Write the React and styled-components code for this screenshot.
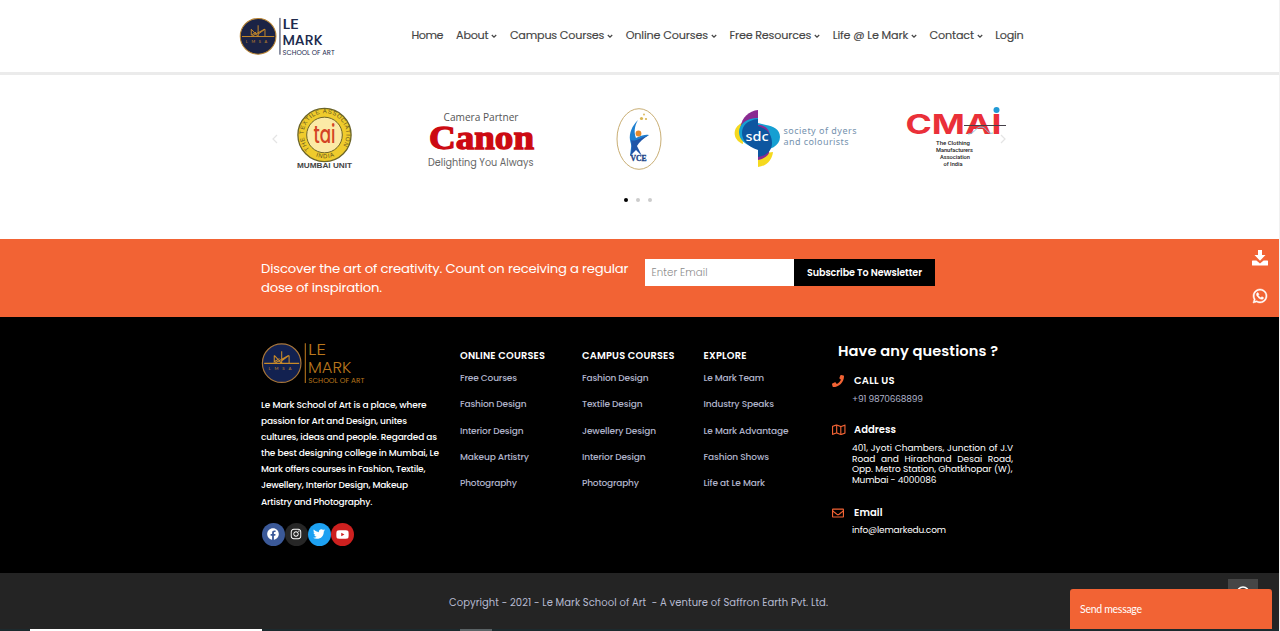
import React, { useLayoutEffect, useRef, useState } from 'react';
import styled, { createGlobalStyle } from 'styled-components';
import { FaWhatsapp, FaFacebook, FaInstagram, FaTwitter, FaYoutube, FaPhone, FaRegMap, FaRegEnvelope } from 'react-icons/fa';

const ORANGE = '#f26334';

const GlobalStyle = createGlobalStyle`
  * { box-sizing: border-box; }
  body {
    margin: 0;
    overflow: hidden;
    background: #fff;
    font-family: Poppins, Inter, "Open Sans", sans-serif;
    font-feature-settings: "cv11";
  }
  p, h3, h4, ul { margin: 0; padding: 0; font-weight: inherit; }
  ul { list-style: none; }
  svg { display: block; flex: none; overflow: visible; }
`;

/* Tracks a line of text so that it fills the given width. */
const Line = styled.span`
  display: inline-block;
  white-space: nowrap;
`;

function Fit({ w, children }) {
  const ref = useRef(null);
  const [tracking, setTracking] = useState(0);
  useLayoutEffect(() => {
    const range = document.createRange();
    range.selectNodeContents(ref.current);
    const natural = range.getBoundingClientRect().width;
    setTracking((w - natural) / (children.length - 1));
  }, [w, children]);
  return <Line ref={ref} style={{ width: `${w}px`, letterSpacing: `${tracking}px` }}>{children}</Line>;
}

const Page = styled.div`
  position: relative;
  width: 1280px;
  height: 631px;
  overflow: hidden;
  border-right: 1px solid #f1f1f1;
  background: #fff;
`;

const Header = styled.header`
  display: flex;
  align-items: center;
  height: 75px;
  padding: 0 0 0 239px;
  border-bottom: 3px solid #ebebeb;
`;

const Nav = styled.nav`
  display: flex;
  gap: 12.6px;
  margin-left: 74.5px;
  padding-bottom: 1px;
`;

const NavItem = styled.a`
  display: flex;
  align-items: center;
  gap: 2.7px;
  height: 20px;
  color: #444;
  font-size: 11.2px;
  font-weight: 400;
  -webkit-text-stroke: 0.15px #444;
`;

const Partners = styled.section`
  display: flex;
  flex-direction: column;
  height: 163.5px;
  padding: 28px 0 0 271.5px;
`;

const Slides = styled.div`
  display: flex;
  align-items: center;
  height: 72px;
`;

const Slide = styled.div`
  margin-left: ${(p) => p.$gap}px;
`;

const Dots = styled.div`
  display: flex;
  gap: 8px;
  margin: 22.5px 0 0 352.7px;
`;

const Dot = styled.i`
  width: 4px;
  height: 4px;
  border-radius: 50%;
  background: ${(p) => (p.$active ? '#000' : '#ccc')};
`;

const Newsletter = styled.section`
  display: flex;
  height: 78.5px;
  padding: 20px 0 0 261px;
  background: ${ORANGE};
  color: #fff;
`;

const Pitch = styled.p`
  display: flex;
  flex-direction: column;
  width: 384px;
  font-size: 13.2px;
  line-height: 19px;
`;

const Form = styled.div`
  display: flex;
  height: 27px;
  margin-top: 0.5px;
`;

const Field = styled.div`
  width: 149px;
  padding-left: 6.5px;
  background: #fff;
  color: #8c8c8c;
  font-size: 10.2px;
  font-weight: 300;
  line-height: 27px;
`;

const Subscribe = styled.button`
  width: 141px;
  padding: 0;
  border: 0;
  background: #000;
  color: #fff;
  font: inherit;
  font-feature-settings: inherit;
  font-size: 9.6px;
  font-weight: 600;
`;

const SideActions = styled.div`
  position: absolute;
  top: 250px;
  right: 11px;
  display: flex;
  flex-direction: column;
  align-items: center;
  gap: 22px;
  color: #fff;
`;

const Footer = styled.footer`
  display: grid;
  grid-template-columns: 199px 122px 121.5px 128.5px 190px;
  height: 256px;
  padding: 22px 0 0 261px;
  background: #000;
  color: #fff;
`;

const About = styled.div`
  display: flex;
  flex-direction: column;
`;

const Blurb = styled.p`
  display: flex;
  flex-direction: column;
  margin-top: 10.3px;
  font-size: 9px;
  font-weight: 500;
  line-height: 16.1px;
`;

const Socials = styled.div`
  display: flex;
  margin: 13.2px 0 0 0.5px;
`;

const Social = styled.a`
  display: grid;
  place-items: center;
  width: 23px;
  height: 23px;
  border-radius: 50%;
  background: ${(p) => p.$color};
`;

const LinkColumn = styled.div`
  padding-top: 9px;
`;

const ColumnTitle = styled.h4`
  height: 16px;
  margin-bottom: 1.3px;
  font-size: 9.8px;
  font-weight: 600;
  line-height: 16px;
`;

const FooterLink = styled.li`
  height: 26.2px;
  color: #b0b4cb;
  font-size: 9px;
  font-weight: 500;
  line-height: 26px;
`;

const Contact = styled.div`
  padding-top: 3px;
`;

const ContactTitle = styled.h3`
  padding-left: 6px;
  font-size: 14.6px;
  font-weight: 600;
  line-height: 18px;
`;

const ContactHead = styled.div`
  display: grid;
  grid-template-columns: 22px 1fr;
  align-items: center;
  height: 16px;
  margin-top: ${(p) => p.$top}px;
  font-size: 10px;
  font-weight: 600;
  svg { color: ${ORANGE}; }
`;

const ContactText = styled.div`
  display: flex;
  flex-direction: column;
  width: 181px;
  margin-top: ${(p) => p.$top}px;
  padding-left: 20px;
  color: ${(p) => (p.$muted ? '#b0b4cb' : '#fff')};
  font-size: 9px;
  line-height: 10.8px;
`;

const Justified = styled.span`
  white-space: nowrap;
  text-align: justify;
  text-align-last: justify;
`;

const Copyright = styled.div`
  display: flex;
  height: 56px;
  padding: 22px 0 0 449px;
  background: #242424;
  color: #b6bad0;
  font-size: 10px;
  line-height: 16px;
`;

const Taskbar = styled.div`
  display: flex;
  height: 2px;
  padding-left: 30px;
  background: #1c2a2e;
`;

const TaskbarBlock = styled.i`
  width: ${(p) => p.$w}px;
  margin-right: 198px;
  background: ${(p) => p.$color};
`;

const ToTop = styled.div`
  position: absolute;
  top: 579px;
  left: 1228px;
  display: flex;
  justify-content: center;
  width: 30px;
  height: 30px;
  padding-top: 7px;
  background: #464646;
`;

const Chat = styled.div`
  position: absolute;
  top: 588.5px;
  left: 1070px;
  width: 202px;
  height: 40.5px;
  padding-left: 10px;
  border-radius: 3px 3px 0 0;
  background: ${ORANGE};
  color: #fff;
  font-family: Lato, sans-serif;
  font-size: 10.5px;
  line-height: 41px;
`;

function Brand({ width, ink, ring, disc, light }) {
  return (
    <svg width={width} height={width * 0.45} viewBox="0 -3 100 45">
      <circle cx="19.5" cy="19.8" r="18.2" fill={disc} stroke={ring} strokeWidth="1.1" />
      <g fill="none" stroke="#c98a28" strokeWidth="1">
        <path d="M3 20h33M19.500 8.500v12M12.500 12.500l7 7.500M12.500 12.500v6l5-3M12.500 20l13.500-7.500M26.500 12.500v7.500M19.500 17.500l7-5" />
      </g>
      <text x="7" y="26.500" fontSize="4" letterSpacing="3.700" fill="#c98a28" fontFamily="Lato">LMSA</text>
      <path d="M41.800 1v37.500" stroke={ink} strokeWidth="1" />
      <g fill={ink} fontFamily="Poppins, Inter, sans-serif" fontWeight={light ? 300 : 500}>
        <text x="44.300" y="11.800" fontSize="15.200" textLength="17" lengthAdjust="spacingAndGlyphs">LE</text>
        <text x="44.300" y="29" fontSize="15.200" textLength="41" lengthAdjust="spacingAndGlyphs">MARK</text>
        <text x="44.500" y="38.500" fontSize="6.500" fontWeight="400" textLength="53" lengthAdjust="spacingAndGlyphs">SCHOOL OF ART</text>
      </g>
    </svg>
  );
}

function Caret() {
  return (
    <svg width="6" height="5" viewBox="0 0 6 5" fill="none" stroke="#484848" strokeWidth="1.3">
      <path d="M.8 2 3 4.100 5.200 2" />
    </svg>
  );
}

function Arrow({ flip }) {
  return (
    <svg width="6" height="10" viewBox="0 0 6 10" fill="none" stroke="#e4e4e4" strokeWidth="1.2">
      <path d={flip ? 'M1 1l4 4-4 4' : 'M5 1 1 5l4 4'} />
    </svg>
  );
}

function DownloadIcon() {
  return (
    <svg width="16" height="16" viewBox="0 0 16 16" fill="currentColor">
      <path d="M6 0h4v5h3.500L8 10.700 2.500 5H6zM.6 10.500h3.800L8 13.600l3.600-3.100h3.800q.6 0 .6.600v3.900q0 .6-.6.600H.6q-.6 0-.6-.600v-3.900q0-.6.6-.600z" />
    </svg>
  );
}

function TextileLogo() {
  return (
    <svg width="58" height="66" viewBox="0 0 58 66">
      <defs>
        <path id="tai-ring" d="M13.500 43.200A21.300 21.300 0 1 1 44.500 43.200" />
        <path id="tai-base" d="M13 46A23.800 23.800 0 0 0 45 46" />
      </defs>
      <circle cx="28.500" cy="29" r="26.600" fill="#efcb2c" stroke="#6b6428" strokeWidth="1.300" />
      <circle cx="28.500" cy="29" r="17.800" fill="#fbeaa6" stroke="#6b6428" strokeWidth="1" />
      <g fill="#5f5320" fontFamily="Liberation Sans" fontSize="6">
        <text><textPath href="#tai-ring" textLength="94">THE TEXTILE ASSOCIATION</textPath></text>
        <text><textPath href="#tai-base" startOffset="8" textLength="19">INDIA</textPath></text>
      </g>
      <text x="17.500" y="37" textLength="22" lengthAdjust="spacingAndGlyphs" fontFamily="Poppins, Inter" fontSize="24" fontWeight="500" fill="#d34424">tai</text>
      <text x="1" y="62" textLength="55" lengthAdjust="spacingAndGlyphs" fontFamily="Liberation Sans" fontSize="7.300" fontWeight="700" fill="#444">MUMBAI UNIT</text>
    </svg>
  );
}

function CanonLogo() {
  return (
    <svg width="108" height="66" viewBox="0 0 108 66">
      <text x="15.500" y="15" textLength="75" lengthAdjust="spacingAndGlyphs" fontFamily="Open Sans" fontSize="10.500" fill="#555">Camera Partner</text>
      <text x="1" y="42.500" textLength="105" lengthAdjust="spacingAndGlyphs" fontFamily="Liberation Serif" fontSize="34" fontWeight="700" fill="#cc0a12" stroke="#cc0a12" strokeWidth="1.300">Canon</text>
      <text x="0" y="59.500" textLength="105.500" lengthAdjust="spacingAndGlyphs" fontFamily="Poppins, Inter" fontSize="10" fill="#666">Delighting You Always</text>
    </svg>
  );
}

function VceLogo() {
  return (
    <svg width="46" height="64" viewBox="0 0 46 64">
      <ellipse cx="23" cy="32" rx="22" ry="30.300" fill="#fff" stroke="#c9ae74" strokeWidth="1" />
      <path d="M22 13c-6 6-9 13-8 20 .3 3 2 5 1 8l-1 8 5-6 3-8c2-3 6-4 11-7-6-1-10 2-13 3-2-5-2-11 2-18z" fill="#1d7fd0" />
      <path d="M15 33c4 2 9-2 18-5-6 4-10 7-12 11l5 10-6-6-6 6c2-5 2-9 1-16z" fill="#1f55a8" />
      <circle cx="22.500" cy="26.500" r="2.900" fill="#e58b2b" />
      <g fill="#d9b552"><circle cx="25.500" cy="11.500" r="1.600" /><circle cx="30" cy="12" r="1.100" /><circle cx="28" cy="7.500" r=".9" /></g>
      <text x="14.500" y="54" textLength="16" lengthAdjust="spacingAndGlyphs" fontFamily="Liberation Serif" fontSize="7.500" fontWeight="700" fill="#183f85" stroke="#183f85" strokeWidth=".3">VCE</text>
    </svg>
  );
}

function SdcLogo() {
  return (
    <svg width="124" height="62" viewBox="0 0 124 62">
      <path d="M8 15C-2 19-2 32 9 36z" fill="#f5d91f" />
      <path d="M24 46v13c9-1 14-7 15-15z" fill="#f5d91f" />
      <path d="M24 2C15 3 8 9 6.500 19L24 20z" fill="#8a2b91" />
      <path d="M24 10C13 10 5 16 5 24c0 8 6 13 19 17 2 4 22 0 22-12 0-8-7-11-14-12l-8-2z" fill="#159fd2" />
      <path d="M24 17c8 0 11 5 12 10l-1 18c-2 4-6 6-11 7z" fill="#8a2b91" />
      <path d="M24 11C13 12 8 18 8 25s5 13 16 17v7c9-1 14-7 14-14 0-8-4-14-14-17z" fill="#0d56a0" />
      <text x="11.500" y="33" textLength="23" lengthAdjust="spacingAndGlyphs" fontFamily="Noto Sans" fontSize="13" fontWeight="500" fill="#fff">sdc</text>
      <g fontFamily="Noto Sans" fontSize="9" fill="#7592ae">
        <text x="49.500" y="26" textLength="73">society of dyers</text>
        <text x="49.500" y="37" textLength="65">and colourists</text>
      </g>
    </svg>
  );
}

function CmaiLogo() {
  return (
    <svg width="104" height="66" viewBox="0 0 104 66">
      <text x="-.5" y="28" textLength="96" lengthAdjust="spacingAndGlyphs" fontFamily="Inter" fontSize="26.500" fontWeight="700" fill="#ea3039">CMAI</text>
      <circle cx="90.500" cy="4" r="3" fill="#2199d5" />
      <path d="M58 19.500h42" stroke="#443f47" strokeWidth="1" />
      <path d="M62 28c7 0 7-7 13-7s6 8 12 6" fill="none" stroke="#82c8dc" strokeWidth="1" />
      <g fontFamily="Roboto" fontSize="6" fontWeight="500" fill="#222">
        <text x="30" y="38.500" textLength="34" lengthAdjust="spacingAndGlyphs">The Clothing</text>
        <text x="30" y="46" textLength="37" lengthAdjust="spacingAndGlyphs">Manufacturers</text>
        <text x="34" y="53" textLength="30" lengthAdjust="spacingAndGlyphs">Association</text>
        <text x="37.500" y="60.300" textLength="19" lengthAdjust="spacingAndGlyphs">of India</text>
      </g>
    </svg>
  );
}

const navItems = [
  ['Home', 32, false], ['About', 32.5, true], ['Campus Courses', 94.5, true], ['Online Courses', 82.5, true],
  ['Free Resources', 82, true], ['Life @ Le Mark', 75.5, true], ['Contact', 44.5, true], ['Login', 28.5, false],
];

const blurb = [
  ['Le Mark School of Art is a place, where', 165.5],
  ['passion for Art and Design, unites', 146],
  ['cultures, ideas and people. Regarded as', 176],
  ['the best designing college in Mumbai, Le', 178],
  ['Mark offers courses in Fashion, Textile,', 164.5],
  ['Jewellery, Interior Design, Makeup', 147],
  ['Artistry and Photography.', 111.5],
];

const columns = [
  { title: ['ONLINE COURSES', 85], links: [['Free Courses', 57], ['Fashion Design', 66.5], ['Interior Design', 63.5], ['Makeup Artistry', 69], ['Photography', 57]] },
  { title: ['CAMPUS COURSES', 92.5], links: [['Fashion Design', 66.5], ['Textile Design', 60.5], ['Jewellery Design', 74], ['Interior Design', 63.5], ['Photography', 57]] },
  { title: ['EXPLORE', 43], links: [['Le Mark Team', 60.5], ['Industry Speaks', 70.5], ['Le Mark Advantage', 85], ['Fashion Shows', 65.5], ['Life at Le Mark', 61.5]] },
];

export default function App() {
  return (
    <Page>
      <GlobalStyle />
      <Header>
        <Brand width={98} ink="#202a4d" ring="#b98432" disc="#1b2345" />
        <Nav>
          {navItems.map(([label, w, menu]) => (
            <NavItem key={label}><Fit w={w}>{label}</Fit>{menu && <Caret />}</NavItem>
          ))}
        </Nav>
      </Header>

      <Partners>
        <Slides>
          <Arrow />
          <Slide $gap={18}><TextileLogo /></Slide>
          <Slide $gap={74}><CanonLogo /></Slide>
          <Slide $gap={80.5}><VceLogo /></Slide>
          <Slide $gap={72}><SdcLogo /></Slide>
          <Slide $gap={47.5}><CmaiLogo /></Slide>
          <Slide $gap={-10}><Arrow flip /></Slide>
        </Slides>
        <Dots><Dot $active /><Dot /><Dot /></Dots>
      </Partners>

      <Newsletter>
        <Pitch>
          <Fit w={367.5}>Discover the art of creativity. Count on receiving a regular</Fit>
          <Fit w={121}>dose of inspiration.</Fit>
        </Pitch>
        <Form>
          <Field><Fit w={56}>Enter Email</Fit></Field>
          <Subscribe><Fit w={115}>Subscribe To Newsletter</Fit></Subscribe>
        </Form>
      </Newsletter>

      <Footer>
        <About>
          <Brand width={106} ink="#b9761c" ring="#a8763a" disc="#122150" light />
          <Blurb>{blurb.map(([text, w]) => <Fit key={text} w={w}>{text}</Fit>)}</Blurb>
          <Socials>
            <Social $color="#3b5998"><FaFacebook size={12} /></Social>
            <Social $color="#262626"><FaInstagram size={12} /></Social>
            <Social $color="#1da1f2"><FaTwitter size={12} /></Social>
            <Social $color="#cd201f"><FaYoutube size={13} /></Social>
          </Socials>
        </About>
        {columns.map(({ title, links }) => (
          <LinkColumn key={title[0]}>
            <ColumnTitle><Fit w={title[1]}>{title[0]}</Fit></ColumnTitle>
            <ul>{links.map(([text, w]) => <FooterLink key={text}><Fit w={w}>{text}</Fit></FooterLink>)}</ul>
          </LinkColumn>
        ))}
        <Contact>
          <ContactTitle><Fit w={160}>Have any questions ?</Fit></ContactTitle>
          <ContactHead $top={13}><FaPhone size={12} /><Fit w={40.5}>CALL US</Fit></ContactHead>
          <ContactText $top={4.5} $muted><Fit w={71}>+91 9870668899</Fit></ContactText>
          <ContactHead $top={17.5}><FaRegMap size={13.5} /><Fit w={42}>Address</Fit></ContactHead>
          <ContactText $top={5}>
            <Justified>401, Jyoti Chambers, Junction of J.V</Justified>
            <Justified>Road and Hirachand Desai Road,</Justified>
            <Fit w={160.5}>Opp. Metro Station, Ghatkhopar (W),</Fit>
            <Fit w={84.5}>Mumbai - 4000086</Fit>
          </ContactText>
          <ContactHead $top={18.7}><FaRegEnvelope size={12} /><Fit w={28.5}>Email</Fit></ContactHead>
          <ContactText $top={4.2}><Fit w={94}>info@lemarkedu.com</Fit></ContactText>
        </Contact>
      </Footer>

      <Copyright>
        <Fit w={379}>{'Copyright - 2021 - Le Mark School of Art \u00a0- A venture of Saffron Earth Pvt. Ltd.'}</Fit>
      </Copyright>
      <Taskbar>
        <TaskbarBlock $w={232} $color="#fff" />
        <TaskbarBlock $w={32} $color="#5a6366" />
      </Taskbar>

      <SideActions><DownloadIcon /><FaWhatsapp size={16} stroke="#fff" strokeWidth="16" /></SideActions>
      <ToTop>
        <svg width="14" height="14" viewBox="0 0 14 14" fill="none" stroke="#fff" strokeWidth="1.500">
          <circle cx="7" cy="7" r="6" />
        </svg>
      </ToTop>
      <Chat><Fit w={62}>Send message</Fit></Chat>
    </Page>
  );
}
